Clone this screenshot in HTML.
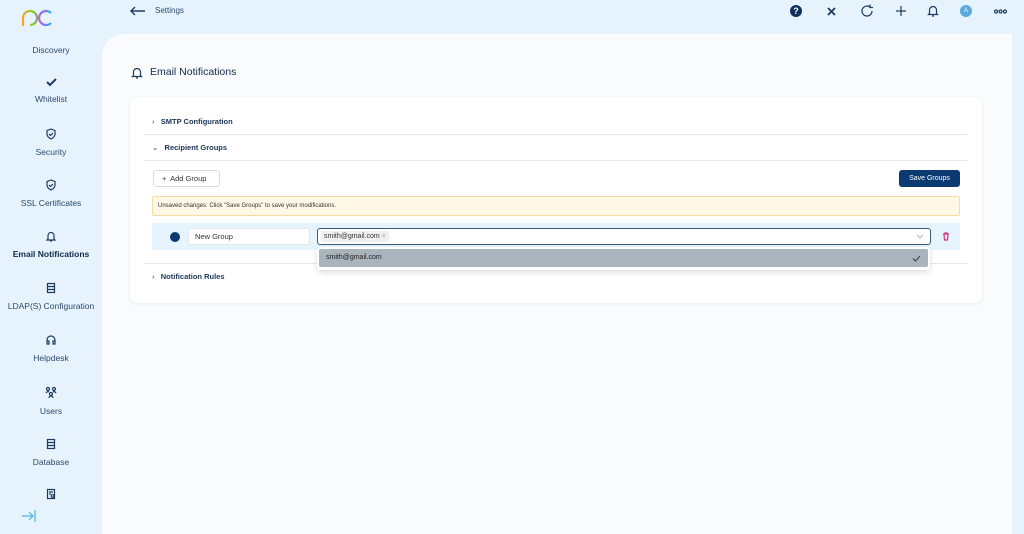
<!DOCTYPE html>
<html><head><meta charset="utf-8"><style>
*{box-sizing:border-box;margin:0;padding:0}
body{width:1024px;height:534px;overflow:hidden;background:#e6f3fc;font-family:"Liberation Sans",sans-serif;color:#1d3557;position:relative}
.a{position:absolute}
.nav{position:absolute;left:0;width:102px;text-align:center;font-size:8.5px;color:#2b4a6b}
.nav svg{display:block;margin:0 auto 7px}
.panel{position:absolute;left:102px;top:34px;width:910px;height:500px;background:#f9fbfd;border-top-left-radius:22px}
.card{position:absolute;left:130px;top:97px;width:852px;height:206px;background:#fff;border-radius:8px;box-shadow:0 1px 4px rgba(0,0,0,.06)}
.row{position:absolute;left:22px;font-size:7.5px;color:#1d3557;font-weight:bold}
.line{position:absolute;left:14px;width:824px;height:1px;background:#e5e8ec}
svg path,svg rect,svg circle{fill:none;stroke:#1d3a5f;stroke-width:1.2}
</style></head><body>
<svg class="a" style="left:21px;top:9px" width="32" height="18" viewBox="0 0 32 18"><defs><linearGradient id="g" x1="0" x2="1"><stop offset="0" stop-color="#f5a623"/><stop offset=".35" stop-color="#7ed321"/><stop offset=".65" stop-color="#b05cf0"/><stop offset="1" stop-color="#22b5e8"/></linearGradient></defs><path d="M2 17V9a7 7 0 1 1 7 7M30 4a7 7 0 1 0 0 10" style="stroke:url(#g);stroke-width:2.2"/></svg>
<div class="nav" style="top:45px">Discovery</div>
<div class="nav" style="top:77px"><svg width="12" height="10" viewBox="0 0 12 10"><path d="M2 5l3 3 6-6" style="stroke-width:2"/></svg>Whitelist</div>
<div class="nav" style="top:128px"><svg width="12" height="12" viewBox="0 0 12 12"><path d="M6 1l4 1.5v3.5c0 2.5-2 4-4 5-2-1-4-2.5-4-5V2.5z M4 6l1.5 1.5L8 5"/></svg>Security</div>
<div class="nav" style="top:179px"><svg width="12" height="12" viewBox="0 0 12 12"><path d="M6 1l4 1.5v3.5c0 2.5-2 4-4 5-2-1-4-2.5-4-5V2.5z M4 6l1.5 1.5L8 5"/></svg>SSL Certificates</div>
<div class="nav" style="top:230px;font-weight:bold;color:#102a4c"><svg width="12" height="12" viewBox="0 0 12 12"><path d="M3 9V5.5a3 3 0 0 1 6 0V9l1 1H2z M5 11h2"/></svg>Email Notifications</div>
<div class="nav" style="top:282px"><svg width="12" height="12" viewBox="0 0 12 12"><rect x="2.5" y="1.5" width="7" height="9"/><path d="M2.5 4.5h7M2.5 7.5h7"/></svg>LDAP(S) Configuration</div>
<div class="nav" style="top:334px"><svg width="12" height="12" viewBox="0 0 12 12"><path d="M2 9V6a4 4 0 0 1 8 0v3M2 7h2v3H2zM8 7h2v3H8z"/></svg>Helpdesk</div>
<div class="nav" style="top:386px"><svg width="14" height="13" viewBox="0 0 14 13"><circle cx="4" cy="3" r="1.5"/><circle cx="10" cy="3" r="1.5"/><circle cx="7" cy="8" r="1.5"/><path d="M2 7a2 2 0 0 1 3-1M12 7a2 2 0 0 0-3-1M5 12a2 2 0 0 1 4 0"/></svg>Users</div>
<div class="nav" style="top:438px"><svg width="12" height="12" viewBox="0 0 12 12"><rect x="2.5" y="1.5" width="7" height="9"/><path d="M2.5 4.5h7M2.5 7.5h7"/></svg>Database</div>
<div class="nav" style="top:488px"><svg width="12" height="12" viewBox="0 0 12 12"><rect x="2.5" y="1.5" width="7" height="9"/><path d="M4 4h4M4 6h2"/><circle cx="7.5" cy="8" r="1.3"/></svg></div>
<svg class="a" style="left:21px;top:510px" width="16" height="12" viewBox="0 0 16 12"><path d="M1 6h11M8 2l4 4-4 4M14 0v12" style="stroke:#4fb3e0"/></svg>
<svg class="a" style="left:130px;top:6px" width="16" height="10" viewBox="0 0 16 10"><path d="M15 5H2M5 1L1 5l4 4" style="stroke-width:1.4"/></svg>
<div class="a" style="left:155px;top:6px;font-size:8px;color:#2b4a6b">Settings</div>
<div class="a" style="left:790px;top:5px;width:12px;height:12px;border-radius:50%;background:#0f2e5a;color:#fff;font-size:9px;font-weight:bold;text-align:center;line-height:12px">?</div>
<svg class="a" style="left:827px;top:7px" width="9" height="9" viewBox="0 0 9 9"><path d="M1 1l7 7M8 1L1 8" style="stroke-width:1.8"/></svg>
<svg class="a" style="left:860px;top:4px" width="14" height="14" viewBox="0 0 14 14"><path d="M12 7a5 5 0 1 1-2-4M10 0.5v3h3"/></svg>
<svg class="a" style="left:896px;top:6px" width="10" height="10" viewBox="0 0 10 10"><path d="M5 0v10M0 5h10"/></svg>
<svg class="a" style="left:927px;top:4px" width="12" height="13" viewBox="0 0 12 13"><path d="M2.5 9.5V6a3.5 3.5 0 0 1 7 0v3.5l1 1h-9z M5 12h2"/></svg>
<div class="a" style="left:960px;top:5px;width:12px;height:12px;border-radius:50%;background:#5aa9dc;color:#fff;font-size:6px;text-align:center;line-height:12px">A</div>
<svg class="a" style="left:994px;top:9px" width="13" height="5" viewBox="0 0 13 5"><circle cx="2" cy="2.5" r="1.5"/><circle cx="6.5" cy="2.5" r="1.5"/><circle cx="11" cy="2.5" r="1.5"/></svg>
<div class="panel"></div>
<svg class="a" style="left:131px;top:66px" width="12" height="13" viewBox="0 0 12 13"><path d="M2.5 9.5V6a3.5 3.5 0 0 1 7 0v3.5l1 1h-9z M5 12h2"/></svg>
<div class="a" style="left:150px;top:66px;font-size:10.5px;color:#102a4c">Email Notifications</div>
<div class="card">
<div class="row" style="top:20px"><span style="font-weight:normal">›</span>&nbsp;&nbsp;&nbsp;SMTP Configuration</div>
<div class="line" style="top:37px"></div>
<div class="row" style="top:46px"><span style="font-weight:normal">⌄</span>&nbsp;&nbsp;&nbsp;Recipient Groups</div>
<div class="line" style="top:63px"></div>
<div class="a" style="left:23px;top:73px;width:67px;height:17px;border:1px solid #d9dde2;border-radius:3px;font-size:7.5px;color:#333;line-height:15px;padding-left:8px">+&nbsp; Add Group</div>
<div class="a" style="left:769px;top:73px;width:61px;height:17px;background:#0b3a73;border-radius:3px;color:#fff;font-size:7px;text-align:center;line-height:17px">Save Groups</div>
<div class="a" style="left:22px;top:99px;width:808px;height:20px;background:#fff8e6;border:1px solid #f4dea0;border-radius:2px;font-size:6px;color:#333;line-height:18px;padding-left:5px">Unsaved changes: Click "Save Groups" to save your modifications.</div>
<div class="a" style="left:22px;top:126px;width:808px;height:27px;background:#e6f4fe"></div>
<div class="a" style="left:40px;top:135px;width:10px;height:10px;border-radius:50%;background:#0b3a73"></div>
<div class="a" style="left:58px;top:131px;width:122px;height:17px;background:#fff;border:1px solid #e2e6ea;border-radius:2px;font-size:7.5px;color:#333;line-height:15px;padding-left:6px">New Group</div>
<div class="a" style="left:187px;top:131px;width:614px;height:17px;background:#fff;border:1.5px solid #3a5a7a;border-radius:3px"></div>
<div class="a" style="left:191px;top:134px;height:11px;background:#f0f0f0;font-size:7px;color:#333;line-height:11px;padding:0 3px">smith@gmail.com <span style="color:#999">×</span></div>
<svg class="a" style="left:786px;top:137px" width="8" height="5" viewBox="0 0 8 5"><path d="M1 1l3 3 3-3" style="stroke:#bbb"/></svg>
<svg class="a" style="left:812px;top:135px" width="8" height="9" viewBox="0 0 8 9"><path d="M1 2h6M3 2V1h2v1M2 2l.5 6h3L6 2" style="stroke:#d0347a"/></svg>
<div class="line" style="top:166px"></div>
<div class="a" style="left:187px;top:150px;width:613px;height:23px;background:#fff;border-radius:3px;box-shadow:0 2px 6px rgba(0,0,0,.15)"></div>
<div class="a" style="left:189px;top:152px;width:609px;height:18px;background:#a9b4bc;border-radius:2px;font-size:7px;color:#222;line-height:18px;padding-left:7px">smith@gmail.com<svg style="position:absolute;right:7px;top:6px" width="9" height="7" viewBox="0 0 9 7"><path d="M1 3.5l2.5 2.5L8 1" style="stroke:#445"/></svg></div>
<div class="row" style="top:175px"><span style="font-weight:normal">›</span>&nbsp;&nbsp;&nbsp;Notification Rules</div>
</div>
</body></html>
